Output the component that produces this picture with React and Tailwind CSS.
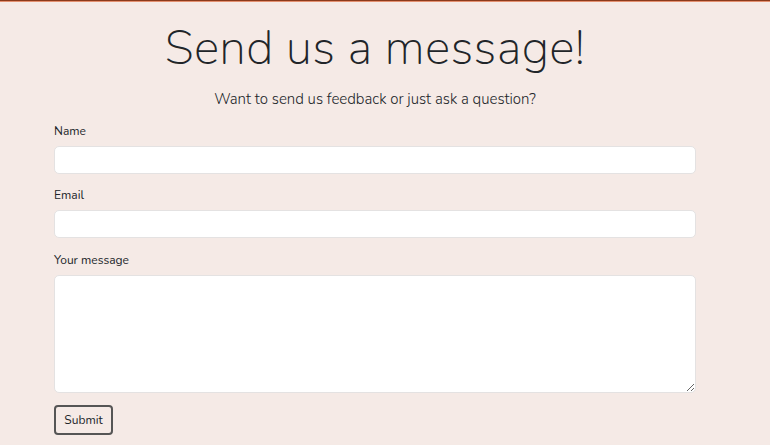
export default function App() {
  const font = { fontFamily: 'Nunito, Lato, "Open Sans", sans-serif' };
  return (
    <div className="min-h-[445px] w-full bg-[#f5eae6] text-[#212529]" style={font}>
      <div className="h-px bg-[#8c3a1c]" />
      <div className="h-px bg-[#e39070]" />
      <div className="w-[750px]">
        <h1 className="mt-[16px] text-center text-[48px] font-extralight leading-[60px] tracking-[0.3px]">Send us a message!</h1>
        <p className="mt-[11px] text-center text-[15px] font-light leading-[20px]">Want to send us feedback or just ask a question?</p>
        <form className="mx-[54px] mt-[13px] flex flex-col" onSubmit={e => e.preventDefault()}>
          <label className="text-[12px] leading-[18px]">Name</label>
          <input className="mt-[6px] h-[28px] rounded-[5px] border border-[#e4e2e2] bg-white px-2" />
          <label className="mt-[12px] text-[12px] leading-[18px]">Email</label>
          <input className="mt-[6px] h-[28px] rounded-[5px] border border-[#e4e2e2] bg-white px-2" />
          <label className="mt-[13px] text-[12px] leading-[18px]">Your message</label>
          <textarea className="mt-[6px] h-[118px] rounded-[5px] border border-[#e4e2e2] bg-white px-2" />
          <div className="mt-[12px]">
            <button type="submit" className="h-[30px] w-[59px] rounded-[4px] border-2 border-[#555] text-[12px]">
              Submit
            </button>
          </div>
        </form>
      </div>
    </div>
  );
}
